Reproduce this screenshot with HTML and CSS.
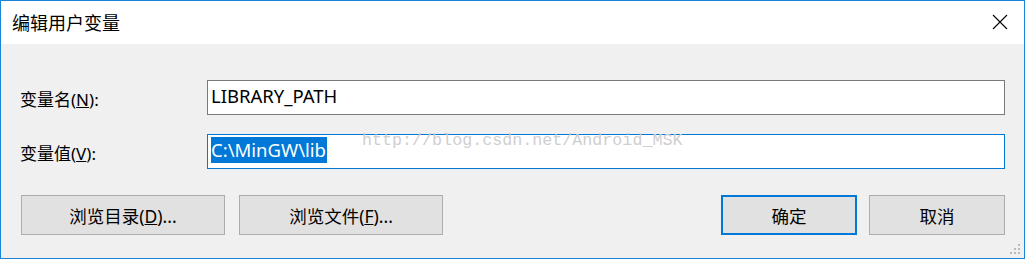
FILE: index.html
```html
<!DOCTYPE html>
<html lang="zh-CN">
<head>
    <meta charset="UTF-8">
    <title>编辑用户变量</title>
    <link rel="stylesheet" href="styles.css">
</head>
<body>
    <div class="window">
        <div class="titlebar">
            <span class="title">编辑用户变量</span>
            <svg class="close" width="16" height="16" viewBox="0 0 16 16">
                <path d="M1 1 L15 15 M15 1 L1 15" stroke="#000" stroke-width="1.1" fill="none"/>
            </svg>
        </div>

        <div class="content">
            <div class="fields">
                <label class="label">变量名(<u>N</u>):</label>
                <div class="input">LIBRARY_PATH</div>

                <label class="label">变量值(<u>V</u>):</label>
                <div class="input focused"><span class="selected">C:\MinGW\lib</span></div>
            </div>

            <div class="buttons">
                <div class="left-buttons">
                    <button class="btn">浏览目录(<u>D</u>)...</button>
                    <button class="btn">浏览文件(<u>F</u>)...</button>
                </div>
                <div class="right-buttons">
                    <button class="btn small default">确定</button>
                    <button class="btn small">取消</button>
                </div>
            </div>
        </div>

        <!-- watermark over the second field -->
        <div class="watermark">http://blog.csdn.net/Android_MSK</div>

        <svg class="grip" width="12" height="12" viewBox="0 0 12 12">
            <rect x="8" y="0" width="2" height="2" fill="#bbb"/>
            <rect x="4" y="4" width="2" height="2" fill="#bbb"/>
            <rect x="8" y="4" width="2" height="2" fill="#bbb"/>
            <rect x="0" y="8" width="2" height="2" fill="#bbb"/>
            <rect x="4" y="8" width="2" height="2" fill="#bbb"/>
            <rect x="8" y="8" width="2" height="2" fill="#bbb"/>
        </svg>
    </div>
</body>
</html>
```

FILE: styles.css
```css
* {
    margin: 0;
    padding: 0;
    box-sizing: border-box;
}

body {
    font-family: "Noto Sans", "Noto Sans CJK SC", sans-serif;
    color: #000;
    background: #fff;
}

.window {
    position: relative;
    width: 1025px;
    height: 259px;
    border: 1px solid #1883d7;
    background-color: #f0f0f0;
}

.titlebar {
    height: 43px;
    background-color: #fff;
    display: flex;
    align-items: center;
    justify-content: space-between;
    padding: 0 16px 0 11px;
}

.title {
    font-size: 18px;
    margin-top: -1px;
}

.close {
    margin-top: -2px;
}

.content {
    padding: 36px 19px 0 19px;
}

.fields {
    display: grid;
    grid-template-columns: 187px 1fr;
    grid-template-rows: 35px 35px;
    row-gap: 19px;
    align-items: center;
}

.label {
    font-size: 17px;
    padding-top: 1px;
}

.input {
    height: 35px;
    background-color: #fff;
    border: 1px solid #7a7a7a;
    font-size: 18.5px;
    padding: 0 0 3px 3px;
    display: flex;
    align-items: center;
    line-height: 26px;
}

.input.focused {
    border-color: #0078d7;
}

.selected {
    background-color: #0078d7;
    color: #fff;
    padding-right: 1px;
}

.buttons {
    margin-top: 26px;
    display: flex;
    justify-content: space-between;
    padding-left: 1px;
}

.left-buttons {
    display: flex;
    gap: 14px;
}

.right-buttons {
    display: flex;
    gap: 12px;
}

.btn {
    width: 204px;
    height: 40px;
    background-color: #e1e1e1;
    border: 1px solid #adadad;
    font-family: "Noto Sans", "Noto Sans CJK SC", sans-serif;
    font-size: 17.5px;
    color: #000;
}

.btn.small {
    width: 136px;
}

.btn.default {
    border: 2px solid #0078d7;
}

.watermark {
    position: absolute;
    left: 361px;
    top: 130px;
    font-family: "Liberation Mono", monospace;
    font-size: 16.7px;
    color: #cfcfcf;
    pointer-events: none;
}

.grip {
    position: absolute;
    right: 2px;
    bottom: 2px;
}
```
